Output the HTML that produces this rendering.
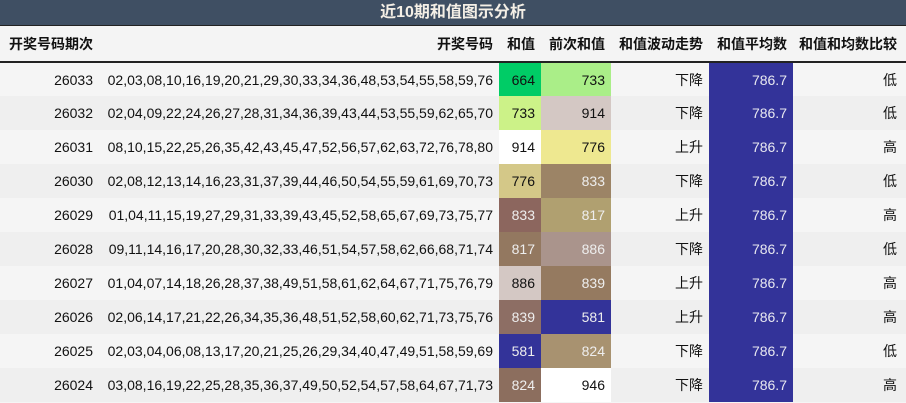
<!DOCTYPE html>
<html><head><meta charset="utf-8"><style>
*{margin:0;padding:0;box-sizing:border-box}
body{width:906px;height:403px;background:#f5f5f5;font-family:"Liberation Sans","Noto Sans CJK SC",sans-serif;font-size:14px;color:#111;overflow:hidden}
.title{height:26px;background:#3f4f63;color:#f4efe6;font-weight:bold;font-size:16px;text-align:center;line-height:26px;border-bottom:1px solid #222}
table{border-collapse:collapse;width:906px;table-layout:fixed}
td,th{height:34px;padding:0 6px;text-align:right;white-space:nowrap;overflow:hidden}
th{font-weight:bold;height:36px;background:#f4f4f4;border-bottom:2px solid #222}
th.l{text-align:left;padding-left:9px}
td:last-child,th:last-child{padding-right:9px}
tr.a td{background:#f5f5f5}
tr.b td{background:#efefef}
td.avg{background:#333399!important;color:#e8e8f0}
.w{color:#eee}
</style></head><body>
<div class="title">近10期和值图示分析</div>
<table>
<colgroup><col style="width:99px"><col style="width:400px"><col style="width:42px"><col style="width:70px"><col style="width:98px"><col style="width:84px"><col style="width:113px"></colgroup>
<tr><th class="l">开奖号码期次</th><th>开奖号码</th><th>和值</th><th>前次和值</th><th>和值波动走势</th><th>和值平均数</th><th>和值和均数比较</th></tr>
<tr class="a"><td>26033</td><td>02,03,08,10,16,19,20,21,29,30,33,34,36,48,53,54,55,58,59,76</td><td style="background:#00cc66">664</td><td style="background:#aaee88">733</td><td>下降</td><td class="avg">786.7</td><td>低</td></tr>
<tr class="b"><td>26032</td><td>02,04,09,22,24,26,27,28,31,34,36,39,43,44,53,55,59,62,65,70</td><td style="background:#ccf288">733</td><td style="background:#d4c8c4">914</td><td>下降</td><td class="avg">786.7</td><td>低</td></tr>
<tr class="a"><td>26031</td><td>08,10,15,22,25,26,35,42,43,45,47,52,56,57,62,63,72,76,78,80</td><td style="background:#fff">914</td><td style="background:#eee890">776</td><td>上升</td><td class="avg">786.7</td><td>高</td></tr>
<tr class="b"><td>26030</td><td>02,08,12,13,14,16,23,31,37,39,44,46,50,54,55,59,61,69,70,73</td><td style="background:#d4c888">776</td><td class="w" style="background:#9c8466">833</td><td>下降</td><td class="avg">786.7</td><td>低</td></tr>
<tr class="a"><td>26029</td><td>01,04,11,15,19,27,29,31,33,39,43,45,52,58,65,67,69,73,75,77</td><td class="w" style="background:#8c665e">833</td><td class="w" style="background:#b0a070">817</td><td>上升</td><td class="avg">786.7</td><td>高</td></tr>
<tr class="b"><td>26028</td><td>09,11,14,16,17,20,28,30,32,33,46,51,54,57,58,62,66,68,71,74</td><td class="w" style="background:#937860">817</td><td class="w" style="background:#aa948c">886</td><td>下降</td><td class="avg">786.7</td><td>低</td></tr>
<tr class="a"><td>26027</td><td>01,04,07,14,18,26,28,37,38,49,51,58,61,62,64,67,71,75,76,79</td><td style="background:#d4c8c4">886</td><td class="w" style="background:#957a60">839</td><td>上升</td><td class="avg">786.7</td><td>高</td></tr>
<tr class="b"><td>26026</td><td>02,06,14,17,21,22,26,34,35,36,48,51,52,58,60,62,71,73,75,76</td><td class="w" style="background:#8d6e64">839</td><td class="w" style="background:#333399">581</td><td>上升</td><td class="avg">786.7</td><td>高</td></tr>
<tr class="a"><td>26025</td><td>02,03,04,06,08,13,17,20,21,25,26,29,34,40,47,49,51,58,59,69</td><td class="w" style="background:#333399">581</td><td class="w" style="background:#a89270">824</td><td>下降</td><td class="avg">786.7</td><td>低</td></tr>
<tr class="b"><td>26024</td><td>03,08,16,19,22,25,28,35,36,37,49,50,52,54,57,58,64,67,71,73</td><td class="w" style="background:#8c6e5e">824</td><td style="background:#fff">946</td><td>下降</td><td class="avg">786.7</td><td>高</td></tr>
</table>
</body></html>
